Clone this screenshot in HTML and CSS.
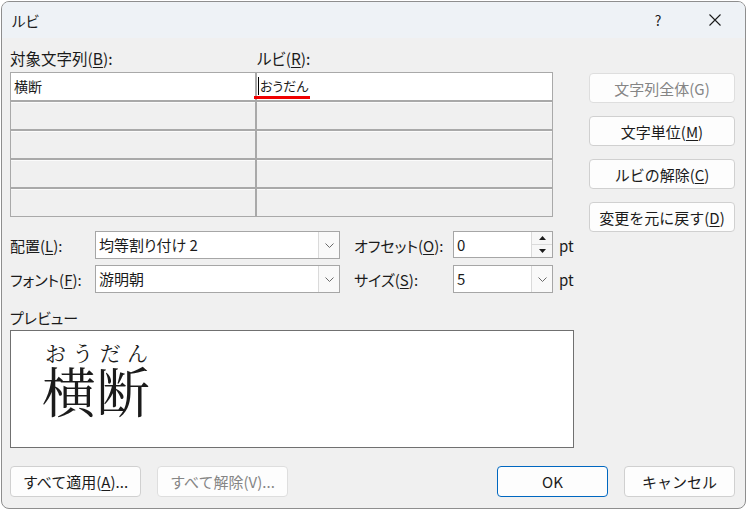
FILE: index.html
```html
<!DOCTYPE html>
<html lang="ja">
<head>
  <meta charset="UTF-8" />
  <title>ルビ</title>
  <link rel="stylesheet" href="styles.css">
</head>
<body>
  <div class="dialog">
    <div class="titlebar">
      <span class="title">ルビ</span>
      <span class="help">?</span>
      <span class="close">
        <svg width="12" height="12" viewBox="0 0 12 12"><path d="M0.5 0.5 L11.5 11.5 M11.5 0.5 L0.5 11.5" stroke="#1b1b1b" stroke-width="1.1" fill="none"/></svg>
      </span>
    </div>

    <div class="content">
      <div class="main">
        <div class="left">
          <div class="grid-labels">
            <span class="col-a">対象文字列(<u>B</u>):</span>
            <span>ルビ(<u>R</u>):</span>
          </div>

          <div class="ruby-grid">
            <div class="cell edit">横断</div>
            <div class="cell edit"><span class="ime"><span class="caret"></span>おうだん</span></div>
            <div class="cell"></div>
            <div class="cell"></div>
            <div class="cell"></div>
            <div class="cell"></div>
            <div class="cell"></div>
            <div class="cell"></div>
            <div class="cell"></div>
            <div class="cell"></div>
          </div>

          <div class="options">
            <span class="opt-label">配置(<u>L</u>):</span>
            <div class="combo">
              <span class="combo-text">均等割り付け 2</span>
              <span class="drop"><svg width="9" height="5" viewBox="0 0 9 5"><path d="M0.5 0.5 L4.5 4.5 L8.5 0.5" stroke="#6a6a6a" fill="none"/></svg></span>
            </div>
            <span class="opt-label second">オフセット(<u>O</u>):</span>
            <div class="combo spin">
              <span class="combo-text">0</span>
              <span class="spin-btns">
                <span class="spin-btn"><svg width="7" height="4" viewBox="0 0 7 4"><path d="M0 4 L3.5 0 L7 4 Z" fill="#1b1b1b"/></svg></span>
                <span class="spin-btn"><svg width="7" height="4" viewBox="0 0 7 4"><path d="M0 0 L3.5 4 L7 0 Z" fill="#1b1b1b"/></svg></span>
              </span>
            </div>
            <span class="unit">pt</span>

            <span class="opt-label">フォント(<u>F</u>):</span>
            <div class="combo">
              <span class="combo-text">游明朝</span>
              <span class="drop"><svg width="9" height="5" viewBox="0 0 9 5"><path d="M0.5 0.5 L4.5 4.5 L8.5 0.5" stroke="#6a6a6a" fill="none"/></svg></span>
            </div>
            <span class="opt-label second">サイズ(<u>S</u>):</span>
            <div class="combo">
              <span class="combo-text">5</span>
              <span class="drop"><svg width="9" height="5" viewBox="0 0 9 5"><path d="M0.5 0.5 L4.5 4.5 L8.5 0.5" stroke="#6a6a6a" fill="none"/></svg></span>
            </div>
            <span class="unit">pt</span>
          </div>

          <div class="preview-label">プレビュー</div>
          <div class="preview">
            <div class="ruby">
              <div class="rt"><span>お</span><span>う</span><span>だ</span><span>ん</span></div>
              <div class="rb">横断</div>
            </div>
          </div>
        </div>

        <div class="side">
          <button class="btn disabled">文字列全体(G)</button>
          <button class="btn">文字単位(<u>M</u>)</button>
          <button class="btn">ルビの解除(<u>C</u>)</button>
          <button class="btn">変更を元に戻す(<u>D</u>)</button>
        </div>
      </div>

      <div class="footer">
        <button class="btn wide">すべて適用(<u>A</u>)...</button>
        <button class="btn wide disabled">すべて解除(V)...</button>
        <button class="btn narrow default">OK</button>
        <button class="btn narrow">キャンセル</button>
      </div>
    </div>
  </div>
</body>
</html>
```

FILE: styles.css
```css
:root {
  --face: #f0f0f0;
  --title: #eef2f6;
  --text: #1b1b1b;
  --muted: #858585;
  --line: #a9a9a9;
  --btn-border: #d0d0d0;
  --accent: #0067c0;
  font-family: "Noto Sans CJK JP", "Noto Sans", sans-serif;
  font-feature-settings: "palt" 1;
}

body {
  margin: 0;
  padding: 1px 0 0 1px;
  background-color: #ffffff;
  color: var(--text);
  font-size: 15px;
}

u {
  text-underline-offset: 2px;
}

.dialog {
  width: 745px;
  height: 508px;
  box-sizing: border-box;
  border: 1px solid #8e8e8e;
  border-radius: 8px;
  overflow: hidden;
  background-color: var(--face);
  display: flex;
  flex-direction: column;
}

.titlebar {
  height: 36px;
  background-color: var(--title);
  display: flex;
  align-items: center;
  padding-left: 10px;
}

.title {
  flex: 1;
  font-size: 14.5px;
}

.help {
  width: 20px;
  margin-right: 41px;
  text-align: center;
  font-size: 14px;
}

.close {
  display: flex;
  margin-right: 24px;
}

.content {
  flex: 1;
  padding: 0 10px 0 8px;
}

.main {
  display: flex;
}

.left {
  width: 564px;
}

/* grid of base text / ruby text */
.grid-labels {
  display: flex;
  height: 34px;
  box-sizing: border-box;
  padding-top: 10px;
  line-height: 20px;
  font-size: 15.5px;
}

.col-a {
  width: 247px;
}

.ruby-grid {
  width: 543px;
  box-sizing: border-box;
  border: 1px solid var(--line);
  background-color: var(--line);
  display: grid;
  grid-template-columns: 244px 1fr;
  grid-auto-rows: 27px;
  gap: 2px;
}

.cell {
  background-color: var(--face);
  border-top: 1px solid #fbfbfb;
}

.cell.edit {
  background-color: #ffffff;
  border-top: none;
  font-size: 14px;
  line-height: 27px;
  padding-left: 3px;
}

.cell.edit .ime {
  display: flex;
  align-items: center;
  width: fit-content;
  height: 20px;
  margin: 3px 0 0 -6px;
  padding: 0 1px 0 4px;
  line-height: 20px;
  font-size: 13px;
  border-bottom: 3px solid #f00000;
}

.caret {
  width: 1px;
  height: 18px;
  background-color: #000;
  margin-right: 1px;
}

/* alignment / font rows */
.options {
  display: grid;
  grid-template-columns: 85px 245px 113px 100px auto;
  grid-auto-rows: 28px;
  row-gap: 6px;
  margin-top: 14px;
  align-items: center;
}

.opt-label.second {
  padding-left: 14px;
}

.combo {
  height: 28px;
  box-sizing: border-box;
  border: 1px solid #a6a6a6;
  background-color: #fff;
  display: flex;
}

.combo-text {
  flex: 1;
  padding-left: 3px;
  line-height: 26px;
  font-size: 15px;
}

.drop {
  width: 20px;
  border-left: 1px solid #dadada;
  background-color: #f9f9f9;
  display: flex;
  align-items: center;
  justify-content: center;
}

.spin {
  height: 27px;
  align-self: start;
}

.spin-btns {
  width: 20px;
  display: flex;
  flex-direction: column;
  border-left: 1px solid #dadada;
}

.spin-btn {
  flex: 1;
  display: flex;
  align-items: center;
  justify-content: center;
  background-color: #f7f7f7;
}

.spin-btn + .spin-btn {
  border-top: 1px solid #dadada;
}

.unit {
  padding-left: 6px;
}

/* preview */
.preview-label {
  margin-top: 15px;
  line-height: 20px;
  margin-bottom: 2px;
}

.preview {
  height: 118px;
  box-sizing: border-box;
  border: 1px solid #707070;
  background-color: #ffffff;
  padding: 10px 0 0 31px;
  font-family: "Noto Serif CJK JP", "Noto Sans CJK JP", serif;
  font-feature-settings: normal;
}

.ruby {
  display: inline-flex;
  flex-direction: column;
}

.rt {
  display: flex;
  justify-content: space-between;
  font-size: 21px;
  line-height: 22px;
  padding: 0 2px 0 3px;
}

.rb {
  font-size: 54px;
  line-height: 54px;
}

/* buttons */
.side {
  width: 146px;
  margin-left: 15px;
  padding-top: 35px;
  display: flex;
  flex-direction: column;
  gap: 13px;
}

.btn {
  height: 30px;
  box-sizing: border-box;
  border: 1px solid var(--btn-border);
  border-radius: 4px;
  background-color: #fdfdfd;
  color: var(--text);
  font-family: inherit;
  font-size: 15px;
  padding: 0;
}

.btn.disabled {
  color: var(--muted);
  border-color: #dedede;
}

.footer {
  display: flex;
  margin-top: 18px;
  gap: 16px;
}

.footer .btn {
  height: 31px;
}

.btn.wide {
  width: 131px;
}

.btn.narrow {
  width: 111px;
}

.btn.default {
  margin-left: auto;
  border-color: var(--accent);
}
```
